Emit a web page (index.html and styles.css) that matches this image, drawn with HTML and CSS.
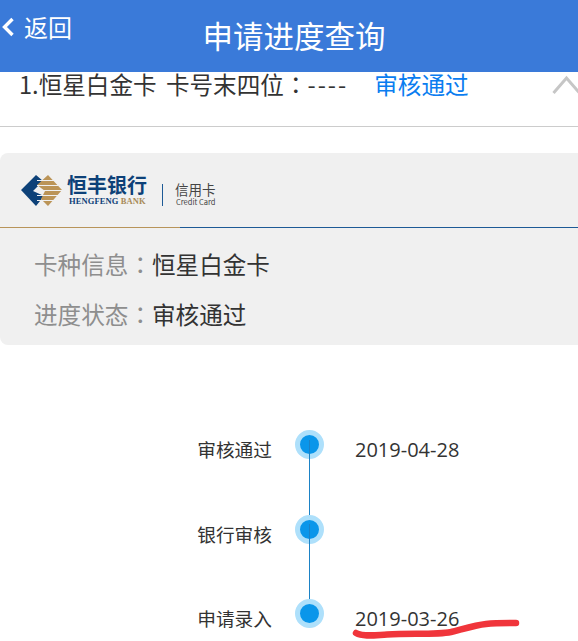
FILE: index.html
```html
<!DOCTYPE html>
<html lang="zh-CN">
<head>
    <meta charset="UTF-8">
    <meta name="viewport" content="width=device-width, initial-scale=1.0">
    <title>申请进度查询</title>
    <link rel="stylesheet" href="styles.css">
</head>
<body>

    <header class="topbar">
        <a class="back" href="#">
            <svg class="back-icon" width="14" height="22" viewBox="0 0 14 22"><polyline points="11.5,3 3.5,11 11.5,19" fill="none" stroke="#fff" stroke-width="3.4"/></svg>
            <span>返回</span>
        </a>
        <h1 class="title">申请进度查询</h1>
    </header>

    <div class="summary">
        <span class="summary-name">1.恒星白金卡 卡号末四位<span class="colon" lang="zh-TW">：</span><span class="dashes">----</span></span>
        <span class="summary-status">审核通过</span>
        <svg class="summary-arrow" width="26" height="20" viewBox="0 0 26 20"><polyline points="1.5,19 14.5,4 27.5,19" fill="none" stroke="#c6c6c6" stroke-width="3"/></svg>
    </div>

    <section class="card">
        <div class="card-logo">
            <svg class="bank-mark" width="42" height="33" viewBox="0 0 42 33">
                <polygon points="0,16 15,1 22,7 12,17 23,22 15,32" fill="#0d4178"/>
                <polygon points="27,1 41,16 27,32 20,25 24,17 16,11" fill="#bb9457"/>
                <g stroke="#f0f0f0" stroke-width="1">
                    <line x1="16" y1="6.500" x2="33" y2="6.500"/>
                    <line x1="16" y1="11.500" x2="37" y2="11.500"/>
                    <line x1="20" y1="16.500" x2="42" y2="16.500"/>
                    <line x1="16" y1="21.500" x2="37" y2="21.500"/>
                    <line x1="16" y1="26.500" x2="33" y2="26.500"/>
                </g>
            </svg>
            <div class="bank-name">
                <div class="bank-cn">恒丰银行</div>
                <div class="bank-en">HENGFENG <span class="bank-en-gold">BANK</span></div>
            </div>
            <div class="logo-sep"></div>
            <div class="bank-card">
                <div class="bank-card-cn">信用卡</div>
                <div class="bank-card-en">Credit Card</div>
            </div>
        </div>
        <div class="card-info">
            <p class="info-row"><span class="info-label">卡种信息<span class="colon" lang="zh-TW">：</span></span>恒星白金卡</p>
            <p class="info-row"><span class="info-label">进度状态<span class="colon" lang="zh-TW">：</span></span>审核通过</p>
        </div>
    </section>

    <ul class="timeline">
        <li class="step">
            <span class="step-name">审核通过</span>
            <span class="step-dot"></span>
            <span class="step-date">2019-04-28</span>
        </li>
        <li class="step">
            <span class="step-name">银行审核</span>
            <span class="step-dot"></span>
            <span class="step-date"></span>
        </li>
        <li class="step">
            <span class="step-name">申请录入</span>
            <span class="step-dot"></span>
            <span class="step-date">2019-03-26</span>
        </li>
    </ul>

    <svg class="scribble" width="170" height="26" viewBox="0 0 170 26"><path d="M5 18 C12 22 25 20 36 19.500 C60 18 85 20 100 17 C112 14 125 10 135 9 C145 8 155 8 165 8" fill="none" stroke="#f0353b" stroke-width="6.500" stroke-linecap="round"/></svg>

</body>
</html>
```

FILE: styles.css
```css
body {
    margin: 0;
    background-color: #fff;
    color: #333;
    font-family: "Noto Sans CJK SC", "Open Sans", sans-serif;
}

.topbar {
    height: 72px;
    background-color: #3a7ad9;
    color: #fff;
    position: relative;
    z-index: 1;
}

.back {
    position: absolute;
    left: 1px;
    top: 15px;
    display: flex;
    align-items: center;
    gap: 9px;
    color: #fff;
    text-decoration: none;
    font-size: 24px;
    line-height: 24px;
}

.title {
    margin: 0 0 0 10px;
    padding-top: 17px;
    text-align: center;
    font-size: 30.500px;
    line-height: 36px;
    font-weight: 400;
}

.summary {
    height: 54px;
    border-bottom: 1px solid #ccc;
    padding-left: 19px;
    display: flex;
    font-size: 23.600px;
    line-height: 24px;
    position: relative;
}

.summary-name {
    white-space: nowrap;
    word-spacing: 4px;
}

.colon {
    font-family: "Noto Sans CJK TC", sans-serif;
}

.dashes {
    letter-spacing: 2px;
}

.summary-status {
    margin-left: 26px;
    color: #0a7df0;
}

.summary-arrow {
    position: absolute;
    right: 0;
    top: 2px;
}

.card {
    margin-top: 26px;
    height: 192px;
    background-color: #f0f0f0;
    border-radius: 8px 0 0 8px;
}

.card-logo {
    height: 75px;
    padding-left: 21px;
    display: flex;
    align-items: center;
    box-sizing: border-box;
    border-bottom: 1px solid;
    border-image: linear-gradient(to right, #b8945a 180px, #1d5a96 180px) 1;
}

.bank-mark {
    flex: none;
}

.bank-name {
    margin-left: 4px;
    color: #0d4178;
}

.bank-cn {
    font-size: 20px;
    line-height: 22px;
    font-weight: 700;
}

.bank-en {
    margin-left: 2px;
    font-family: "Liberation Serif", serif;
    font-size: 8.500px;
    line-height: 10px;
    font-weight: 700;
    white-space: nowrap;
    letter-spacing: 0.100px;
}

.bank-en-gold {
    color: #a88a58;
}

.logo-sep {
    width: 1px;
    height: 22px;
    margin: 10px 0 0 15px;
    background-color: #1d5a96;
}

.bank-card {
    margin: 8px 0 0 12px;
    color: #444;
}

.bank-card-cn {
    font-size: 13.500px;
    line-height: 14px;
}

.bank-card-en {
    margin: 1px 0 0 1px;
    font-size: 7.500px;
    line-height: 9px;
    white-space: nowrap;
}

.card-info {
    padding: 11px 0 0 34px;
}

.info-row {
    margin: 0;
    font-size: 23.600px;
    line-height: 50px;
}

.info-label {
    color: #8e8e8e;
}

.timeline {
    list-style: none;
    margin: 85px 0 0;
    padding: 0;
}

.step {
    height: 84.500px;
    display: flex;
    position: relative;
}

.step:last-child {
    height: 40px;
}

/* linea entre los puntos */
.step + .step::before {
    content: "";
    position: absolute;
    left: 309px;
    top: -75px;
    width: 1px;
    height: 84px;
    background-color: #1b82c6;
}

.step-name {
    width: 272px;
    padding-top: 5px;
    text-align: right;
    font-size: 18.700px;
    line-height: 28px;
}

.step-dot {
    flex: none;
    width: 19px;
    height: 19px;
    margin-left: 23px;
    background-color: #0a96ea;
    border: 5px solid #aee0fb;
    border-radius: 50%;
    position: relative;
}

.step-date {
    margin-left: 31px;
    padding-top: 6px;
    font-family: "Open Sans", sans-serif;
    font-size: 20px;
    line-height: 28px;
    white-space: nowrap;
}

.scribble {
    position: absolute;
    left: 351px;
    top: 615px;
}
```
